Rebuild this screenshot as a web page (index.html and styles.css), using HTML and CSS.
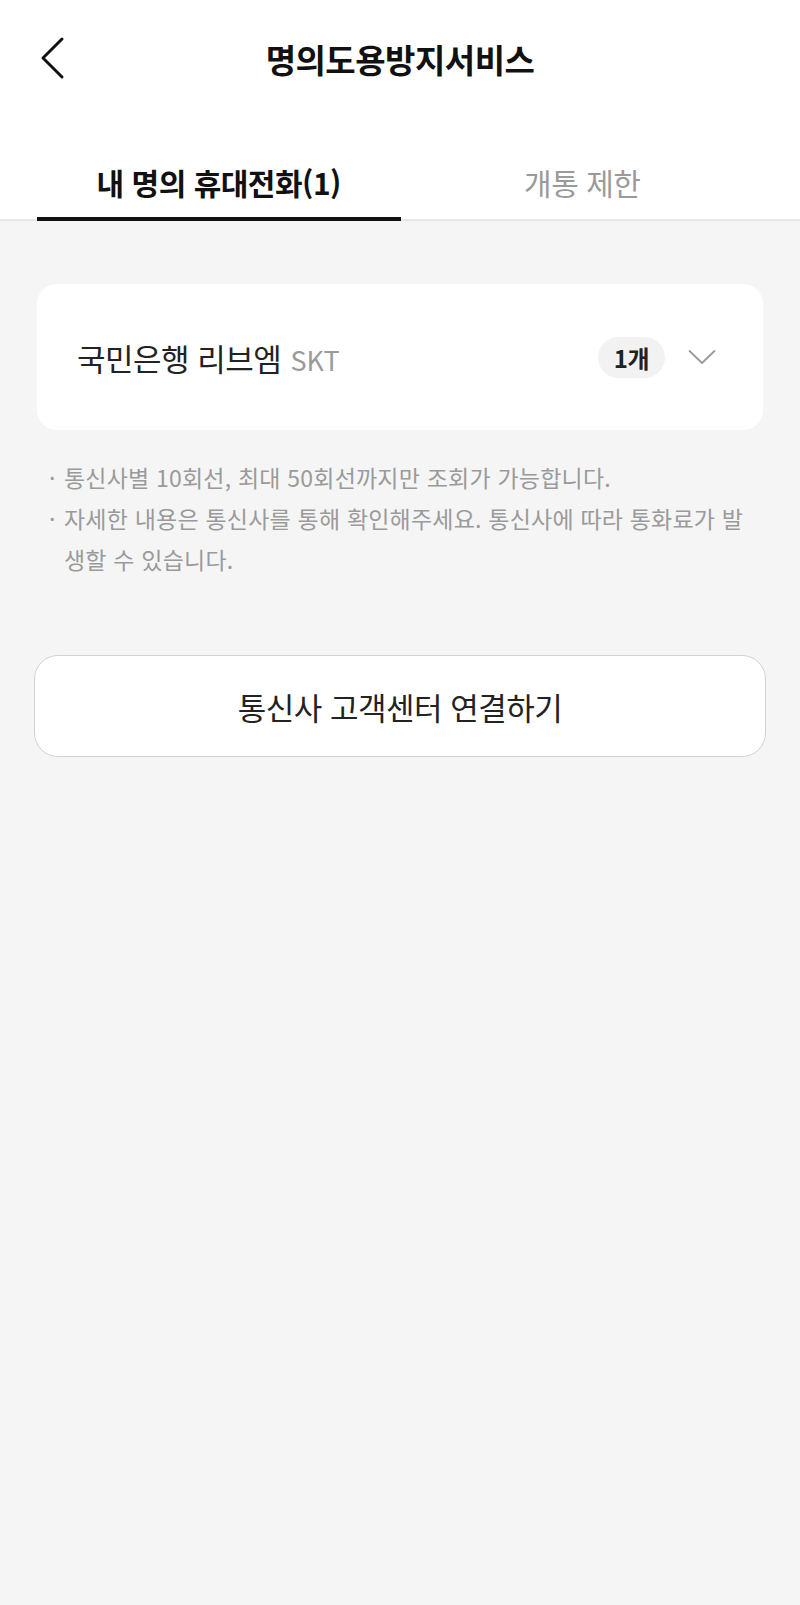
FILE: index.html
```html
<!DOCTYPE html>
<html lang="ko">
<head>
<meta charset="utf-8">
<link rel="stylesheet" href="styles.css">
</head>
<body>
<div class="page">
  <header class="header">
    <div class="topbar">
      <span class="back">
        <svg width="26" height="44" viewBox="0 0 26 44"><path d="M23 3 L4 22 L23 41" fill="none" stroke="#111" stroke-width="3" stroke-linecap="round" stroke-linejoin="round"/></svg>
      </span>
      <h1 class="title">명의도용방지서비스</h1>
    </div>
    <nav class="tabs">
      <div class="tab active">내 명의 휴대전화(1)</div>
      <div class="tab">개통 제한</div>
    </nav>
  </header>
  <main class="content">
    <section class="card">
      <div class="card-name">국민은행 리브엠 <span class="carrier">SKT</span></div>
      <div class="card-right">
        <span class="badge">1개</span>
        <svg class="chev" width="28" height="16" viewBox="0 0 28 16"><path d="M1.5 2 L14 14 L26.5 2" fill="none" stroke="#9a9a9a" stroke-width="1.8" stroke-linecap="round" stroke-linejoin="round"/></svg>
      </div>
    </section>
    <ul class="notes">
      <li>통신사별 10회선, 최대 50회선까지만 조회가 가능합니다.</li>
      <li>자세한 내용은 통신사를 통해 확인해주세요. 통신사에 따라 통화료가 발생할 수 있습니다.</li>
    </ul>
    <button class="connect">통신사 고객센터 연결하기</button>
  </main>
</div>
</body>
</html>
```

FILE: styles.css
```css
* { box-sizing: border-box; }
html, body {
  margin: 0;
  padding: 0;
  background: #f5f5f5;
  font-family: "Noto Sans CJK KR", "Noto Sans", sans-serif;
  color: #222;
}
.page {
  min-height: 1605px;
  background: #f5f5f5;
}
.header {
  background: #fff;
  border-bottom: 2px solid #e8e8e8;
}
.topbar {
  position: relative;
  height: 120px;
  display: flex;
  justify-content: center;
  padding-top: 34px;
}
.back {
  position: absolute;
  left: 39px;
  top: 36px;
  display: flex;
}
.title {
  margin: 0;
  font-size: 33px;
  font-weight: 700;
  color: #111;
  line-height: 50px;
  letter-spacing: -0.5px;
}
.tabs {
  display: flex;
  padding: 0 36px 0 37px;
  margin-bottom: -2px;
}
.tab {
  flex: 1;
  text-align: center;
  font-size: 30px;
  line-height: 44px;
  padding: 40px 0 13px;
  color: #9a9a9a;
  letter-spacing: -0.5px;
  border-bottom: 4px solid transparent;
}
.tab.active {
  font-weight: 700;
  color: #111;
  border-bottom-color: #111;
}
.content {
  padding: 63px 37px 0 37px;
}
.card {
  background: #fff;
  border-radius: 20px;
  height: 146px;
  display: flex;
  align-items: center;
  justify-content: space-between;
  padding: 0 47px 0 40px;
}
.card-name {
  font-size: 31px;
  color: #222;
  letter-spacing: -0.5px;
}
.carrier {
  font-size: 27px;
  color: #9a9a9a;
  margin-left: 1px;
  letter-spacing: 0;
}
.card-right {
  display: flex;
  align-items: center;
  gap: 23px;
}
.badge {
  background: #f2f2f2;
  border-radius: 21px;
  height: 41px;
  padding: 0 16px;
  display: flex;
  align-items: center;
  font-size: 24px;
  font-weight: 700;
  color: #222;
  letter-spacing: -0.5px;
}
.chev { display: block; }
.notes {
  list-style: none;
  margin: 27px 0 0;
  padding: 0 10px 0 27px;
  font-size: 23px;
  line-height: 41px;
  color: #9a9a9a;
  letter-spacing: 0.2px;
}
.notes li {
  position: relative;
}
.notes li::before {
  content: "·";
  position: absolute;
  left: -15px;
}
.connect {
  display: block;
  width: 732px;
  height: 102px;
  margin: 75px 0 0 -3px;
  background: #fff;
  border: 1.5px solid #d2d2d2;
  border-radius: 24px;
  font-family: inherit;
  font-size: 31px;
  color: #222;
  letter-spacing: -0.5px;
  padding: 0;
}
```
